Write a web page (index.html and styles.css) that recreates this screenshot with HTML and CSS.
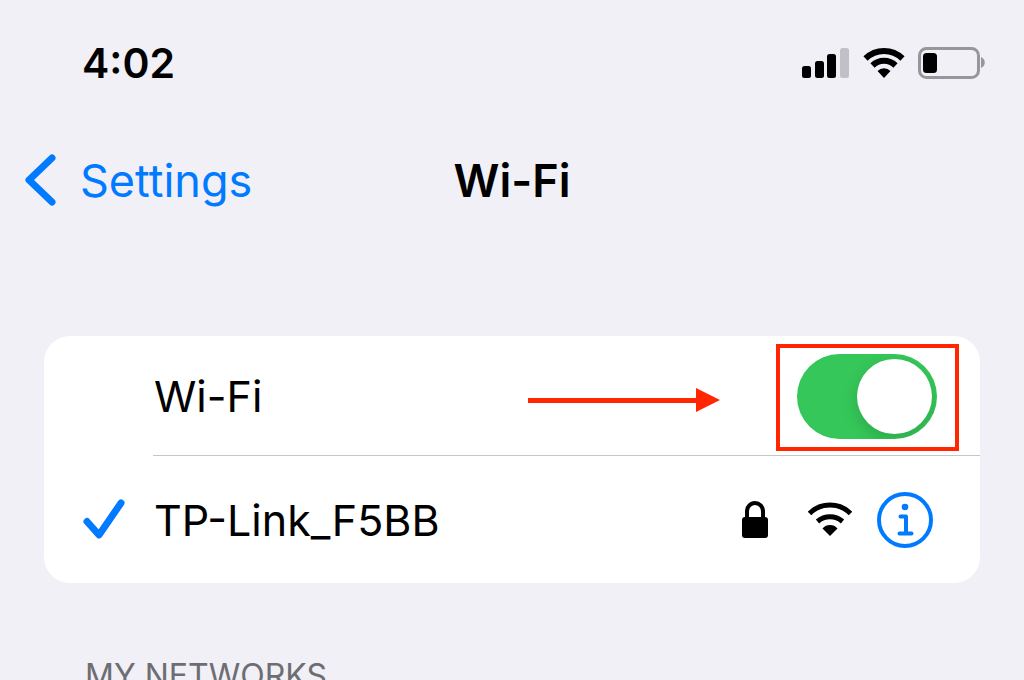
FILE: index.html
```html
<!DOCTYPE html>
<html lang="en">
<head>
    <meta charset="UTF-8">
    <meta name="viewport" content="width=device-width, initial-scale=1.0">
    <title>Wi-Fi</title>
    <link rel="stylesheet" href="styles.css">
</head>
<body>
    <div class="status-bar">
        <div class="time">4:02</div>
        <div class="status-icons">
            <svg class="signal" width="48" height="32" viewBox="0 0 48 32" aria-label="Signal">
                <rect x="0" y="19" width="9" height="12" rx="2.500"/>
                <rect x="13" y="14" width="9" height="17" rx="2.500"/>
                <rect x="25" y="7" width="9" height="24" rx="2.500"/>
                <rect class="signal-off" x="38" y="1" width="9" height="30" rx="2.500"/>
            </svg>
            <svg class="wifi" width="42" height="32" viewBox="0 0 42 32" aria-label="Wi-Fi">
                <path class="wifi-arc" d="M2.500 11.500a26.500 26.500 0 0 1 37 0M9.500 18.500a16.500 16.500 0 0 1 23 0"/>
                <path d="M14.500 24a9 9 0 0 1 13 0L21 31z"/>
            </svg>
            <svg class="battery" width="68" height="32" viewBox="0 0 68 32" aria-label="Battery">
                <rect class="battery-case" x="1.500" y="1.500" width="59" height="29" rx="7"/>
                <rect x="5" y="6" width="14" height="20" rx="3.500"/>
                <path class="battery-tip" d="M63 10c5 2 5 9 0 11z"/>
            </svg>
        </div>
    </div>

    <div class="nav-bar">
        <a class="back" href="#">
            <svg width="32" height="54" viewBox="0 0 32 54" aria-hidden="true">
                <path d="M28 5 5 27l23 22"/>
            </svg>
            Settings
        </a>
        <h1 class="title">Wi-Fi</h1>
    </div>

    <div class="card">
        <div class="row">
            <label class="name switch-name" for="wifi-switch">Wi-Fi</label>
            <svg class="arrow" width="192" height="30" viewBox="0 0 192 30" aria-hidden="true">
                <path d="M0 15h168V5l24 12-24 12V20H0z"/>
            </svg>
            <div class="highlight">
                <input class="switch" type="checkbox" role="switch" id="wifi-switch" checked>
            </div>
        </div>
        <div class="row network">
            <svg class="check" width="42" height="42" viewBox="0 0 42 42" aria-label="Connected">
                <path d="M4 22.500 16 36 38 4"/>
            </svg>
            <span class="name">TP-Link_F5BB</span>
            <div class="network-icons">
                <svg width="26" height="38" viewBox="0 0 26 38" aria-label="Secured">
                    <path class="lock-bar" d="M5 18v-7.500a8 8.500 0 0 1 16 0V18"/>
                    <rect x="0" y="16" width="26" height="21" rx="3"/>
                </svg>
                <svg class="wifi" width="44" height="38" viewBox="0 0 44 38" aria-label="Signal strength">
                    <path class="wifi-arc thin" d="M1.500 12.500a29 29 0 0 1 41 0M9.500 20.500a19 19 0 0 1 25 0"/>
                    <path d="M14.500 27.500a10 10 0 0 1 15 0L22 35z"/>
                </svg>
                <button class="info" type="button" aria-label="Network details">
                    <svg width="56" height="56" viewBox="0 0 56 56" aria-hidden="true">
                        <circle class="info-line" cx="28" cy="28" r="26"/>
                        <circle cx="28" cy="15" r="3.300"/>
                        <path class="info-line info-letter" d="M23.500 24.500H29v17M22.500 41.500h12"/>
                    </svg>
                </button>
            </div>
        </div>
    </div>

    <h2 class="section-title">MY NETWORKS</h2>
</body>
</html>
```

FILE: styles.css
```css
* {
    box-sizing: border-box;
}
body {
    margin: 0;
    height: 100vh;
    overflow: hidden;
    background-color: #f1f0f6;
    color: #000;
    font-family: Inter, "Liberation Sans", sans-serif;
}
svg {
    display: block;
    flex-shrink: 0;
}
.status-bar {
    display: flex;
    justify-content: space-between;
    align-items: center;
    height: 126px;
    padding: 0 38px 0 82px;
}
.time {
    font-size: 41px;
    font-weight: 600;
}
.status-icons {
    display: flex;
    align-items: center;
    gap: 13px;
}
.signal-off {
    fill: #c1c0c6;
}
.wifi-arc {
    fill: none;
    stroke: #000;
    stroke-width: 6;
}
.thin {
    stroke-width: 5;
}
.battery-case {
    fill: none;
    stroke: #97969b;
    stroke-width: 3;
}
.battery-tip {
    fill: #97969b;
}
.nav-bar {
    display: grid;
    grid-template-columns: 1fr auto 1fr;
    align-items: center;
    height: 108px;
    padding: 0 24px;
}
.back {
    display: flex;
    align-items: center;
    gap: 24px;
    color: #007aff;
    font-size: 45px;
    text-decoration: none;
}
.back path,
.check path {
    fill: none;
    stroke: #007aff;
    stroke-width: 7;
    stroke-linecap: round;
    stroke-linejoin: round;
}
.title {
    margin: 0;
    font-size: 45px;
    font-weight: 600;
}
.card {
    margin: 102px 44px 0;
    border-radius: 26px;
    background-color: #fff;
}
.row {
    display: flex;
    align-items: center;
    margin-left: 109px;
    padding: 8px 21px 4px 1px;
    border-bottom: 1px solid #c6c6c8;
}
.name {
    font-size: 43px;
}
.switch-name {
    padding-bottom: 4px;
}
.arrow {
    margin-left: auto;
    margin-right: 56px;
    fill: #ff2600;
}
.highlight {
    padding: 6px 18px 8px 17px;
    border: 4px solid #ff2600;
}
.switch {
    display: block;
    appearance: none;
    width: 140px;
    height: 85px;
    margin: 0;
    padding: 5px;
    border-radius: 43px;
    background-color: #35c759;
    overflow: hidden;
    cursor: pointer;
}
.switch::before {
    content: "";
    display: block;
    width: 75px;
    height: 75px;
    border-radius: 50%;
    background-color: #fff;
    box-shadow: 0 6px 16px rgba(0, 0, 0, 0.15);
}
.switch:checked::before {
    margin-left: auto;
}
.network {
    height: 127px;
    margin-left: 0;
    padding: 0 47px 0 39px;
    border-bottom: none;
}
.check {
    margin-right: 29px;
}
.network-icons {
    display: flex;
    align-items: center;
    gap: 40px;
    margin-left: auto;
}
.lock-bar {
    fill: none;
    stroke: #000;
    stroke-width: 4;
}
.info {
    margin-left: -15px;
    padding: 0;
    border: none;
    background: none;
    fill: #007aff;
    cursor: pointer;
}
.info-line {
    fill: none;
    stroke: #007aff;
    stroke-width: 4;
}
.info-letter {
    stroke-linecap: round;
    stroke-linejoin: round;
}
.section-title {
    margin: 73px 85px 0;
    color: #6d6d72;
    font-size: 32px;
    font-weight: 400;
}
```
